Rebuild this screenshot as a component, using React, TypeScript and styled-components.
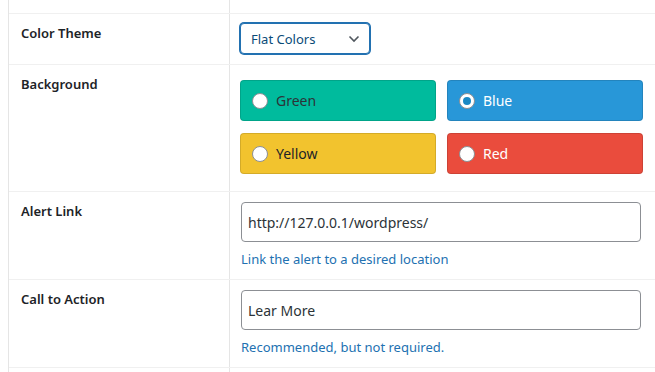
import React, { useState } from 'react'
import styled, { createGlobalStyle } from 'styled-components'

const GlobalStyle = createGlobalStyle`
  html, body {
    margin: 0;
    padding: 0;
    background: #fff;
  }
  body {
    font-family: 'Noto Sans', 'Open Sans', sans-serif;
    font-size: 13px;
    color: #1d2327;
  }
`

type Swatch = 'green' | 'blue' | 'yellow' | 'red'

const swatches: { [key in Swatch]: { label: string; bg: string; fg: string } } = {
  green: { label: 'Green', bg: '#00bb9d', fg: '#2c3338' },
  blue: { label: 'Blue', bg: '#2897d8', fg: '#ffffff' },
  yellow: { label: 'Yellow', bg: '#f2c32e', fg: '#1d2327' },
  red: { label: 'Red', bg: '#ea4c3d', fg: '#ffffff' },
}

const App: React.FC = () => {
  const [background, setBackground] = useState<Swatch>('blue')

  return (
    <>
      <GlobalStyle />
      <Page>
        <FormTable>
          <Row>
            <Label $top />
            <Field $top />
          </Row>
          <Row>
            <Label>Color Theme</Label>
            <Field>
              <SelectBox>
                <span>Flat Colors</span>
                <svg width="12" height="8" viewBox="0 0 12 8">
                  <polyline
                    points="1.5,1.5 6,6 10.5,1.5"
                    fill="none"
                    stroke="#50575e"
                    strokeWidth="1.6"
                  />
                </svg>
              </SelectBox>
            </Field>
          </Row>
          <Row>
            <Label>Background</Label>
            <Field>
              <SwatchGrid>
                {(Object.keys(swatches) as Swatch[]).map((key) => (
                  <SwatchOption
                    key={key}
                    $bg={swatches[key].bg}
                    $fg={swatches[key].fg}
                    onClick={() => setBackground(key)}
                  >
                    <RadioDot $checked={background === key} />
                    {swatches[key].label}
                  </SwatchOption>
                ))}
              </SwatchGrid>
            </Field>
          </Row>
          <Row>
            <Label>Alert Link</Label>
            <Field>
              <TextInput defaultValue="http://127.0.0.1/wordpress/" />
              <Description>Link the alert to a desired location</Description>
            </Field>
          </Row>
          <Row>
            <Label>Call to Action</Label>
            <Field>
              <TextInput defaultValue="Lear More" />
              <Description>Recommended, but not required.</Description>
            </Field>
          </Row>
          <Row>
            <Label />
            <Field />
          </Row>
        </FormTable>
      </Page>
    </>
  )
}

const Page = styled.div`
  padding-left: 8px;
  height: 372px;
  overflow: hidden;
`

const FormTable = styled.div`
  width: 680px;
  border-left: 1px solid #e5e5e5;
`

const Row = styled.div`
  display: grid;
  grid-template-columns: 221px 1fr;
  border-bottom: 1px solid #f0f0f0;
`

const Label = styled.div<{ $top?: boolean }>`
  padding: ${(p) => (p.$top ? '0' : '10px 12px')};
  height: ${(p) => (p.$top ? '13px' : 'auto')};
  min-height: ${(p) => (p.$top ? '0' : '30px')};
  border-right: 1px solid #e5e5e5;
  font-weight: 600;
  font-size: 13px;
  line-height: 1.5;
  color: #1d2327;
`

const Field = styled.div<{ $top?: boolean }>`
  padding: ${(p) => (p.$top ? '0' : '9px 10px')};
  height: ${(p) => (p.$top ? '13px' : 'auto')};
`

const SelectBox = styled.div`
  display: flex;
  align-items: center;
  justify-content: space-between;
  box-sizing: border-box;
  width: 130px;
  height: 31px;
  padding: 0 9px 0 10px;
  border: 1px solid #2271b1;
  box-shadow: 0 0 0 1px #2271b1;
  border-radius: 4px;
  font-size: 13px;
  color: #0a4b78;
  background: #fff;
  svg {
    display: block;
  }
`

const SwatchGrid = styled.div`
  display: grid;
  grid-template-columns: 196px 196px;
  column-gap: 11px;
  row-gap: 12px;
  margin: 6px 0 8px;
`

const SwatchOption = styled.label<{ $bg: string; $fg: string }>`
  display: flex;
  align-items: center;
  gap: 8px;
  box-sizing: border-box;
  height: 41px;
  padding: 0 11px;
  border: 1px solid rgba(0, 0, 0, 0.12);
  border-radius: 4px;
  background: ${(p) => p.$bg};
  color: ${(p) => p.$fg};
  font-size: 14px;
  cursor: pointer;
`

const RadioDot = styled.span<{ $checked: boolean }>`
  display: inline-flex;
  align-items: center;
  justify-content: center;
  box-sizing: border-box;
  width: 16px;
  height: 16px;
  border-radius: 50%;
  border: 1px solid #8c8f94;
  background: #fff;
  &::after {
    content: '';
    display: ${(p) => (p.$checked ? 'block' : 'none')};
    width: 8px;
    height: 8px;
    border-radius: 50%;
    background: #1a88c4;
  }
`

const TextInput = styled.input`
  display: block;
  box-sizing: border-box;
  width: 400px;
  height: 40px;
  margin: 1px 0 0 1px;
  padding: 0 6px;
  border: 1px solid #8c8f94;
  border-radius: 4px;
  font-family: inherit;
  font-size: 14px;
  color: #2c3338;
  background: #fff;
  outline: none;
`

const Description = styled.p`
  margin: 8px 0 1px 1px;
  font-size: 13px;
  line-height: 19px;
  color: #2271b1;
`

export default App
